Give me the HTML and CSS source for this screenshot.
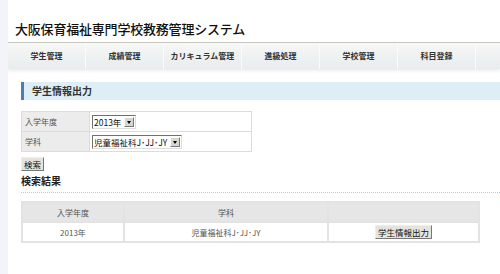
FILE: index.html
```html
<!DOCTYPE html>
<html lang="ja">
<head>
  <meta charset="UTF-8">
  <title>学生情報出力</title>
  <link rel="stylesheet" href="styles.css">
</head>
<body>
  <div class="page">
    <h1 class="site-title">大阪保育福祉専門学校教務管理システム</h1>

    <ul class="nav">
      <li>学生管理</li>
      <li>成績管理</li>
      <li>カリキュラム管理</li>
      <li>進級処理</li>
      <li>学校管理</li>
      <li>科目登録</li>
    </ul>

    <div class="content">
      <h2 class="section-title">学生情報出力</h2>

      <table class="form-table">
        <tr>
          <th>入学年度</th>
          <td>
            <span class="sel-wrap">
              <select class="sel">
                <option>2013年</option>
              </select>
            </span>
          </td>
        </tr>
        <tr>
          <th>学科</th>
          <td>
            <span class="sel-wrap">
              <select class="sel">
                <option>児童福祉科J･JJ･JY</option>
              </select>
            </span>
          </td>
        </tr>
      </table>

      <button class="btn btn-search" type="button">検索</button>

      <h3 class="result-title">検索結果</h3>

      <table class="result-table">
        <tr>
          <th class="c1">入学年度</th>
          <th class="c2">学科</th>
          <th class="c3"></th>
        </tr>
        <tr>
          <td>2013年</td>
          <td>児童福祉科J･JJ･JY</td>
          <td><button class="btn" type="button">学生情報出力</button></td>
        </tr>
      </table>
    </div>
  </div>
</body>
</html>
```

FILE: styles.css
```css
body {
  margin: 0;
  background-color: #f3f4f9;
  font-family: 'Noto Sans CJK JP', 'Noto Sans', sans-serif;
  color: #333;
}

.page {
  box-sizing: border-box;
  height: 274px;
  margin-left: 8px;
  padding-top: 20px;
  overflow: hidden;
  background-color: #fff;
}

.site-title {
  margin: 0 0 4px 7px;
  font-size: 13px;
  font-weight: 500;
  line-height: 18px;
  letter-spacing: -0.2px;
  color: #111;
}

.nav {
  display: flex;
  margin: 0;
  padding: 0;
  list-style: none;
  height: 26px;
  border-top: 1px solid #c9c9bd;
  background: linear-gradient(#f7f8f8, #e7ecec);
  box-shadow: 0 2px 3px rgba(120, 130, 150, 0.15);
}

.nav li {
  width: 77px;
  border-right: 1px solid #fbfbfb;
  text-align: center;
  font-size: 8px;
  font-weight: bold;
  line-height: 26px;
  color: #333;
}

.content {
  padding: 13px 0 0 13px;
}

.section-title {
  margin: 0;
  height: 18px;
  padding-left: 8px;
  border-left: 3px solid #4d7bb6;
  background-color: #deeef7;
  font-size: 10px;
  font-weight: bold;
  line-height: 18px;
  color: #333;
}

.form-table {
  margin-top: 11px;
  width: 231px;
  border-collapse: collapse;
  font-size: 8px;
}

.form-table th,
.form-table td {
  height: 19px;
  padding: 0;
  border: 1px solid #dcdcdc;
}

.form-table th {
  width: 64px;
  padding-left: 3px;
  background-color: #ececec;
  text-align: left;
  font-weight: normal;
  color: #555;
}

.form-table td {
  padding-left: 2px;
}

.sel-wrap {
  position: relative;
  display: inline-block;
  vertical-align: middle;
}

.sel {
  display: block;
  box-sizing: border-box;
  height: 14px;
  padding: 0 13px 0 1px;
  border: 1px solid #6f6f6f;
  border-right-color: #ddd;
  border-bottom-color: #ddd;
  appearance: none;
  -webkit-appearance: none;
  font-family: inherit;
  font-size: 8.5px;
  line-height: 12px;
  color: #111;
  background-color: #fff;
}

.sel-wrap::after {
  content: "";
  position: absolute;
  top: 2px;
  right: 2px;
  width: 10px;
  height: 10px;
  box-sizing: border-box;
  border: 1px solid #fff;
  border-right-color: #777;
  border-bottom-color: #777;
  background: #d8d6cf;
}

.sel-wrap::before {
  content: "";
  position: absolute;
  z-index: 1;
  top: 6px;
  right: 5px;
  border-left: 2px solid transparent;
  border-right: 2px solid transparent;
  border-top: 3px solid #000;
}

.btn {
  height: 14px;
  padding: 0 2px;
  border: 1px solid #777;
  border-top-color: #eee;
  border-left-color: #eee;
  background-color: #e5e4dc;
  font-family: inherit;
  font-size: 8.5px;
  line-height: 12px;
  color: #111;
}

.btn-search {
  display: block;
  margin-top: 5px;
}

.result-title {
  margin: 3px 0 0;
  padding-bottom: 4px;
  border-bottom: 1px dotted #b5c9e3;
  font-size: 10px;
  font-weight: bold;
  line-height: 14px;
  color: #222;
}

.result-table {
  margin-top: 8px;
  width: 459px;
  border-collapse: collapse;
  font-size: 8px;
  color: #555;
}

.result-table th,
.result-table td {
  height: 18px;
  padding: 0;
  border: 2px solid #e3e3e3;
  text-align: center;
}

.result-table th {
  background-color: #e6e6e6;
  font-weight: normal;
}

.result-table .c1 {
  width: 100px;
}

.result-table .c2 {
  width: 202px;
}
```
